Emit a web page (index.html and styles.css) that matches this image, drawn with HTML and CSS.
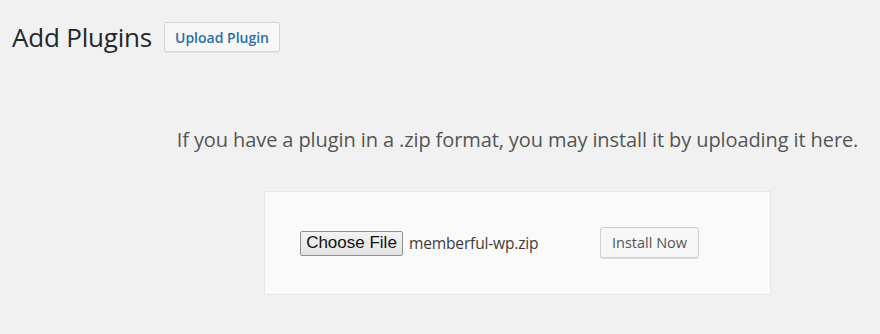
FILE: index.html
```html
<!DOCTYPE html>
<html>
<head>
<meta charset="utf-8">
<link rel="stylesheet" href="styles.css">
</head>
<body>
<div class="wrap">
  <div class="heading">
    <h1 class="title">Add Plugins</h1>
    <a class="upload-btn">Upload Plugin</a>
  </div>
  <div class="upload-area">
    <p class="help">If you have a plugin in a .zip format, you may install it by uploading it here.</p>
    <form class="upload-form">
      <div class="file-input">
        <span class="choose-btn">Choose File</span>
        <span class="file-name">memberful-wp.zip</span>
      </div>
      <span class="install-btn">Install Now</span>
    </form>
  </div>
</div>
</body>
</html>
```

FILE: styles.css
```css
html, body {
  margin: 0;
  padding: 0;
  background: #f1f1f1;
  font-family: "Open Sans", "Noto Sans", sans-serif;
  color: #444;
}
.wrap {
  padding: 22px 0 0 12px;
}
.heading {
  display: flex;
  align-items: center;
  gap: 12px;
}
.title {
  margin: 0;
  font-size: 26px;
  font-weight: 400;
  color: #23282d;
  line-height: 30px;
  letter-spacing: -0.2px;
}
.upload-btn {
  display: inline-flex;
  align-items: center;
  height: 28px;
  padding: 0 10px;
  border: 1px solid #d4d4d4;
  border-radius: 2px;
  background: #f7f7f7;
  color: #2a6fa3;
  font-size: 14px;
  font-weight: 600;
  box-shadow: 0 1px 0 #e4e4e4;
}
.upload-area {
  margin-left: 143px;
  display: flex;
  flex-direction: column;
  align-items: center;
}
.help {
  margin: 75px 0 0 0;
  font-size: 20px;
  color: #555;
  line-height: 26px;
  letter-spacing: -0.1px;
}
.upload-form {
  margin-top: 38px;
  width: 470px;
  height: 102px;
  padding: 0 0 0 35px;
  background: #fafafa;
  border: 1px solid #e6e6e6;
  display: flex;
  align-items: center;
}
.file-input {
  display: flex;
  align-items: center;
  width: 300px;
}
.choose-btn {
  display: inline-flex;
  align-items: center;
  justify-content: center;
  box-sizing: border-box;
  width: 103px;
  height: 25px;
  border: 1px solid #8f8f8f;
  border-radius: 2px;
  background: linear-gradient(#f3f3f3, #e3e3e3);
  font-family: "Liberation Sans", Arial, sans-serif;
  font-size: 17px;
  color: #111;
}
.file-name {
  margin-left: 6px;
  font-size: 15.6px;
  color: #3c3c3c;
  letter-spacing: -0.2px;
}
.install-btn {
  display: inline-flex;
  align-items: center;
  justify-content: center;
  box-sizing: border-box;
  width: 99px;
  height: 31px;
  border: 1px solid #d0d0d0;
  border-radius: 3px;
  background: #f7f7f7;
  box-shadow: 0 1px 0 #dcdcdc;
  color: #555;
  font-size: 14.5px;
  margin-top: -1px;
}
```
